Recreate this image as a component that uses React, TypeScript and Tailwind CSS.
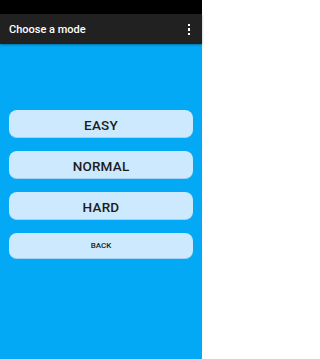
import React from 'react';

const modes = ['EASY', 'NORMAL', 'HARD'];

export default function App() {
  return (
    <div className="w-[202px] h-[359px] flex flex-col bg-[#03a9f4]" style={{ fontFamily: 'Roboto, "Noto Sans", sans-serif' }}>
      {/* Status bar */}
      <div className="h-[14px] bg-black shrink-0" />

      {/* Toolbar */}
      <div className="h-[30px] shrink-0 bg-[#212121] flex items-center justify-between pl-[9px] pr-[12px] shadow-[0_1px_2px_rgba(0,0,0,0.35)]">
        <span className="text-white text-[11px] font-medium pt-[2px]">Choose a mode</span>
        <div className="flex flex-col gap-[2px] pt-[1px]">
          <span className="w-[2.5px] h-[2.5px] bg-white" />
          <span className="w-[2.5px] h-[2.5px] bg-white" />
          <span className="w-[2.5px] h-[2.5px] bg-white" />
        </div>
      </div>

      {/* Buttons */}
      <div className="flex flex-col gap-[13.5px] px-[9px] pt-[66px]">
        {modes.map((m) => (
          <button
            key={m}
            className="h-[27.5px] pt-[3px] rounded-[8px] bg-[#cde9fd] text-[#1c1c1c] text-[13.5px] font-medium tracking-[0.2px] border-b border-[#9fd3f5]"
          >
            {m}
          </button>
        ))}
        <button className="h-[26px] rounded-[8px] bg-[#cde9fd] text-[#1c1c1c] text-[8px] font-medium border-b border-[#9fd3f5]">
          BACK
        </button>
      </div>
    </div>
  );
}
